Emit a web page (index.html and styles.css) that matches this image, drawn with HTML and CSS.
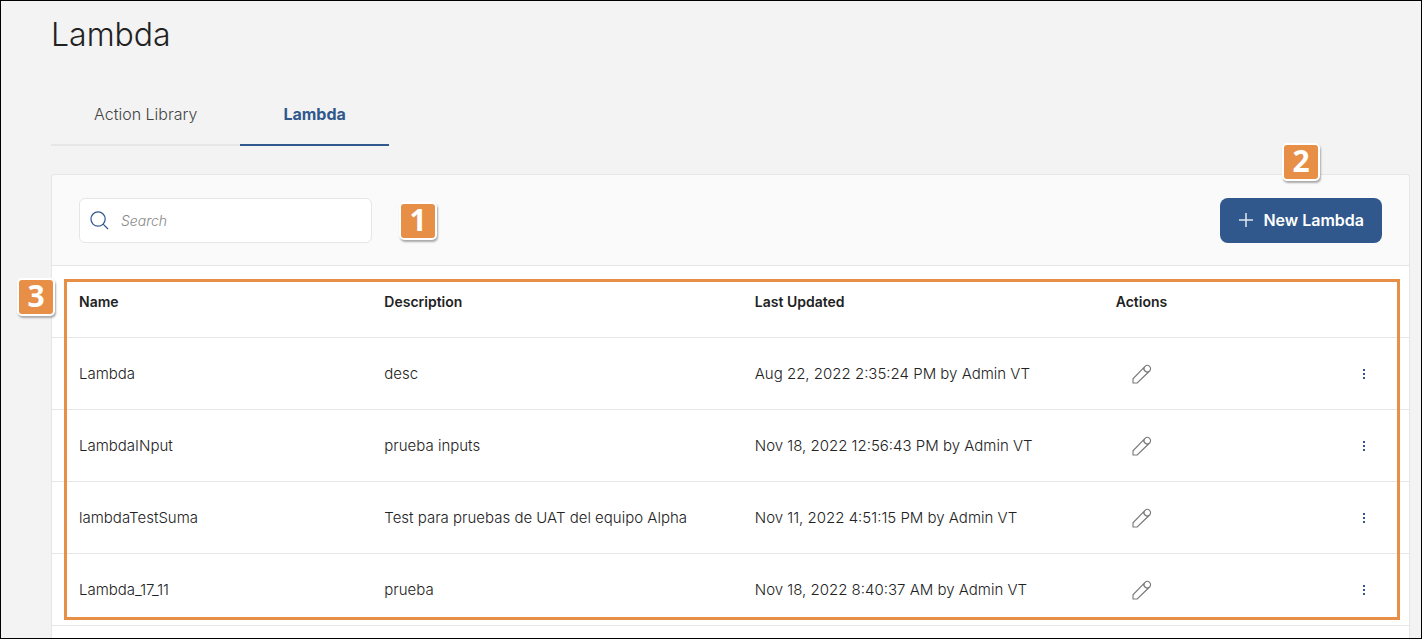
FILE: index.html
```html
<!DOCTYPE html>
<html lang="en">
<head>
    <meta charset="UTF-8">
    <meta name="viewport" content="width=device-width, initial-scale=1.0">
    <title>Lambda</title>
    <link rel="stylesheet" href="styles.css">
</head>
<body>

<!-- shared icons -->
<svg class="sprite" aria-hidden="true">
    <symbol id="pencil" viewBox="0 0 20 20">
        <path d="M1 19v-4.2L13 2.4a3.2 3.2 0 0 1 4.6 4.6L5.2 19z M11.4 4q.6 4.2 4.8 4.6 M13 2.4a3.2 3.2 0 0 0 4.6 4.6"/>
    </symbol>
    <symbol id="dots" viewBox="0 0 4 12">
        <path d="M1 1h2v2H1z M1 5h2v2H1z M1 9h2v2H1z"/>
    </symbol>
</svg>

<main class="page">

<h1>Lambda</h1>

<nav class="tabs">
    <a href="#library" class="tab">Action Library</a>
    <a href="#lambda" class="tab active">Lambda</a>
</nav>

<section class="card">
    <div class="toolbar">
        <label class="search">
            <svg class="search-icon" viewBox="0 0 20 20" aria-hidden="true">
                <circle cx="8.5" cy="8.5" r="7.5"/>
                <path d="M13.8 13.8L19 19"/>
            </svg>
            <input type="search" placeholder="Search" aria-label="Search">
        </label>
        <span class="badge">1</span>

        <button type="button" class="new-btn">
            <svg class="plus" viewBox="0 0 14 14" aria-hidden="true">
                <path d="M7 0v14M0 7h14"/>
            </svg>
            New Lambda
        </button>
        <span class="badge badge-2">2</span>
    </div>

    <div class="table-area">
        <table>
            <thead>
                <tr>
                    <th class="col-name">Name</th>
                    <th class="col-desc">Description</th>
                    <th class="col-date">Last Updated</th>
                    <th>Actions</th>
                    <th class="col-menu"></th>
                </tr>
            </thead>
            <tbody>
                <tr>
                    <td>Lambda</td>
                    <td>desc</td>
                    <td>Aug 22, 2022 2:35:24 PM by Admin VT</td>
                    <td><button type="button" class="icon-btn edit" aria-label="Edit"><svg><use href="#pencil"/></svg></button></td>
                    <td><button type="button" class="icon-btn more" aria-label="More"><svg><use href="#dots"/></svg></button></td>
                </tr>
                <tr>
                    <td>LambdaINput</td>
                    <td>prueba inputs</td>
                    <td>Nov 18, 2022 12:56:43 PM by Admin VT</td>
                    <td><button type="button" class="icon-btn edit" aria-label="Edit"><svg><use href="#pencil"/></svg></button></td>
                    <td><button type="button" class="icon-btn more" aria-label="More"><svg><use href="#dots"/></svg></button></td>
                </tr>
                <tr>
                    <td>lambdaTestSuma</td>
                    <td>Test para pruebas de UAT del equipo Alpha</td>
                    <td>Nov 11, 2022 4:51:15 PM by Admin VT</td>
                    <td><button type="button" class="icon-btn edit" aria-label="Edit"><svg><use href="#pencil"/></svg></button></td>
                    <td><button type="button" class="icon-btn more" aria-label="More"><svg><use href="#dots"/></svg></button></td>
                </tr>
                <tr>
                    <td>Lambda_17_11</td>
                    <td>prueba</td>
                    <td>Nov 18, 2022 8:40:37 AM by Admin VT</td>
                    <td><button type="button" class="icon-btn edit" aria-label="Edit"><svg><use href="#pencil"/></svg></button></td>
                    <td><button type="button" class="icon-btn more" aria-label="More"><svg><use href="#dots"/></svg></button></td>
                </tr>
            </tbody>
        </table>
        <div class="highlight"></div>
        <span class="badge badge-3">3</span>
    </div>
</section>

</main>

</body>
</html>
```
FILE: styles.css
```css
* {
    box-sizing: border-box;
}

body {
    margin: 0;
    font-family: Inter, "Liberation Sans", sans-serif;
    font-size: 15px;
    font-weight: 300;
    color: #222;
    background: #f3f3f3;
}

.sprite {
    display: none;
}

.page {
    display: flex;
    flex-direction: column;
    min-height: 100vh;
    padding: 14px 11px 0 50px;
    border: 1px solid #000;
}

h1 {
    margin: 0;
    font-size: 32px;
    line-height: 40px;
    font-weight: 300;
}

/* tabs */
.tabs {
    display: flex;
    margin-top: 28px;
}

.tab {
    padding: 20px 43px 19px;
    border-bottom: 2px solid #e6e6e6;
    font-size: 16px;
    line-height: 22px;
    color: #444;
    text-decoration: none;
}

.tab.active {
    border-color: #30588c;
    color: #30588c;
    font-weight: 700;
}

/* card */
.card {
    flex: 1;
    margin-top: 28px;
    border: 1px solid #e6e6e6;
    border-bottom: none;
    border-radius: 4px 4px 0 0;
    background: #fff;
}

.toolbar {
    position: relative;
    display: flex;
    align-items: center;
    padding: 23px 27px 22px;
    border-bottom: 1px solid #e6e6e6;
    border-radius: 4px 4px 0 0;
    background: #fafafa;
}

.search {
    display: flex;
    align-items: center;
    gap: 12px;
    width: 293px;
    height: 45px;
    padding: 0 10px;
    border: 1px solid #e6e6e6;
    border-radius: 6px;
    background: #fff;
}

.search-icon {
    width: 19px;
    height: 19px;
    fill: none;
    stroke: #30588c;
    stroke-width: 1.3;
}

.search input {
    flex: 1;
    min-width: 0;
    padding: 0;
    border: none;
    outline: none;
    background: none;
    font: inherit;
    font-size: 14px;
}

.search input::placeholder {
    color: #888;
    font-style: italic;
}

.new-btn {
    display: flex;
    align-items: center;
    gap: 10px;
    height: 45px;
    margin-left: auto;
    padding: 0 18px 2px 19px;
    border: none;
    border-radius: 8px;
    background: #30588c;
    color: #fff;
    font-family: inherit;
    font-size: 16px;
    font-weight: 600;
    cursor: pointer;
}

.plus {
    width: 14px;
    height: 14px;
    stroke: #dfe6ee;
    stroke-width: 1.5;
}

/* table */
.table-area {
    position: relative;
}

table {
    width: 100%;
    border-spacing: 0;
    table-layout: fixed;
}

th, td {
    height: 72px;
    padding: 0 0 0 27px;
    border-bottom: 1px solid #e6e6e6;
    text-align: left;
}

th {
    font-size: 14px;
    font-weight: 600;
}

.col-name {
    width: 22.5%;
}

.col-desc {
    width: 27.3%;
}

.col-date {
    width: 26.6%;
}

.col-menu {
    width: 90px;
}

.icon-btn {
    display: block;
    padding: 0;
    border: none;
    background: none;
    cursor: pointer;
}

.icon-btn svg {
    display: block;
}

.edit {
    margin-left: 16px;
}

.edit svg {
    width: 20px;
    height: 20px;
    fill: none;
    stroke: #777;
    stroke-width: 1.1;
}

.more {
    margin-left: 16px;
}

.more svg {
    width: 4px;
    height: 12px;
    fill: #30588c;
}

/* numbered marks */
.highlight {
    position: absolute;
    inset: 13px 9px 6px 12px;
    border: 3px solid #e78f47;
    pointer-events: none;
}

.badge {
    width: 38px;
    height: 38px;
    margin-left: 27px;
    border: 2px solid #fff;
    border-radius: 5px;
    background: #e78f47;
    box-shadow: 1px 2px 2px #aaa;
    color: #fff;
    font-family: "Open Sans", "Liberation Sans", sans-serif;
    font-size: 30px;
    line-height: 32px;
    font-weight: 700;
    text-align: center;
}

.badge-2 {
    position: absolute;
    top: -32px;
    right: 89px;
}

.badge-3 {
    position: absolute;
    top: 12px;
    left: -62px;
}
```
